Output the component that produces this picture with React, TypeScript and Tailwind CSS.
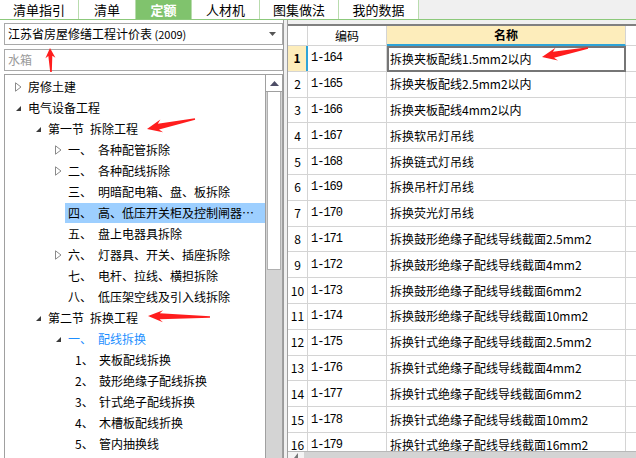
import React from 'react';

type Node = {
  level: number;
  toggle?: 'open' | 'closed';
  prefix?: string;
  label: string;
  sub?: string;
  selected?: boolean;
  blue?: boolean;
};

const tree: Node[] = [
  { level: 0, toggle: 'closed', label: '房修土建' },
  { level: 0, toggle: 'open', label: '电气设备工程' },
  { level: 1, toggle: 'open', label: '第一节', sub: '拆除工程' },
  { level: 2, toggle: 'closed', prefix: '一、', label: '各种配管拆除' },
  { level: 2, toggle: 'closed', prefix: '二、', label: '各种配线拆除' },
  { level: 2, prefix: '三、', label: '明暗配电箱、盘、板拆除' },
  { level: 2, prefix: '四、', label: '高、低压开关柜及控制闸器…', selected: true },
  { level: 2, prefix: '五、', label: '盘上电器具拆除' },
  { level: 2, toggle: 'closed', prefix: '六、', label: '灯器具、开关、插座拆除' },
  { level: 2, prefix: '七、', label: '电杆、拉线、横担拆除' },
  { level: 2, prefix: '八、', label: '低压架空线及引入线拆除' },
  { level: 1, toggle: 'open', label: '第二节', sub: '拆换工程' },
  { level: 2, toggle: 'open', prefix: '一、', label: '配线拆换', blue: true },
  { level: 3, prefix: '1、', label: '夹板配线拆换' },
  { level: 3, prefix: '2、', label: '鼓形绝缘子配线拆换' },
  { level: 3, prefix: '3、', label: '针式绝子配线拆换' },
  { level: 3, prefix: '4、', label: '木槽板配线折换' },
  { level: 3, prefix: '5、', label: '管内抽换线' },
];

const indent = ['pl-[10px]', 'pl-[30px]', 'pl-[50px]', 'pl-[70px]'];

const rows: [string, string][] = [
  ['1-164', '拆换夹板配线1.5mm2以内'],
  ['1-165', '拆换夹板配线2.5mm2以内'],
  ['1-166', '拆换夹板配线4mm2以内'],
  ['1-167', '拆换软吊灯吊线'],
  ['1-168', '拆换链式灯吊线'],
  ['1-169', '拆换吊杆灯吊线'],
  ['1-170', '拆换荧光灯吊线'],
  ['1-171', '拆换鼓形绝缘子配线导线截面2.5mm2'],
  ['1-172', '拆换鼓形绝缘子配线导线截面4mm2'],
  ['1-173', '拆换鼓形绝缘子配线导线截面6mm2'],
  ['1-174', '拆换鼓形绝缘子配线导线截面10mm2'],
  ['1-175', '拆换针式绝缘子配线导线截面2.5mm2'],
  ['1-176', '拆换针式绝缘子配线导线截面4mm2'],
  ['1-177', '拆换针式绝缘子配线导线截面6mm2'],
  ['1-178', '拆换针式绝缘子配线导线截面10mm2'],
  ['1-179', '拆换针式绝缘子配线导线截面16mm2'],
];

const tabs = [
  { label: '清单指引', w: 'w-[79px]' },
  { label: '清单', w: 'w-[57px]' },
  { label: '定额', w: 'w-[56px]', active: true },
  { label: '人材机', w: 'w-[68px]' },
  { label: '图集做法', w: 'w-[79px]' },
  { label: '我的数据', w: 'w-[80px]' },
];

function arrowPoints(tip: [number, number], tail: [number, number], headLen: number, headW: number, shaftW: number) {
  const dx = tail[0] - tip[0];
  const dy = tail[1] - tip[1];
  const L = Math.hypot(dx, dy);
  const ux = dx / L, uy = dy / L;
  const nx = -uy, ny = ux;
  const p = (a: number, b: number) => `${tip[0] + ux * a + nx * b},${tip[1] + uy * a + ny * b}`;
  return [
    p(0, 0),
    p(headLen, headW / 2),
    p(headLen * 0.78, shaftW / 2),
    p(L, 0.8),
    p(L, -0.8),
    p(headLen * 0.78, -shaftW / 2),
    p(headLen, -headW / 2),
  ].join(' ');
}

const Toggle = ({ kind }: { kind?: 'open' | 'closed' }) => (
  <span className="w-[13px] h-full flex items-center shrink-0">
    {kind === 'closed' && (
      <svg width="7" height="10" viewBox="0 0 7 10">
        <path d="M0.5 0.8 L6 5 L0.5 9.2 Z" fill="white" stroke="#8a8a8a" strokeWidth="1" />
      </svg>
    )}
    {kind === 'open' && (
      <svg width="7" height="10" viewBox="0 0 7 10">
        <path d="M6 3 L6 8 L1 8 Z" fill="#3a3a3a" />
      </svg>
    )}
  </span>
);

export default function App() {
  return (
    <div className="relative w-[636px] h-[458px] overflow-hidden bg-[#f0f0f0] font-['Noto_Sans_CJK_SC',sans-serif] text-[12px] text-black">
      {/* tabs */}
      <div className="flex h-[20px] border-b border-[#8cc97b] bg-[#f0f0f0]">
        {tabs.map((t) => (
          <div
            key={t.label}
            className={`${t.w} h-full flex items-center justify-center border-r border-[#b9dcae] text-[13px] leading-none ${
              t.active ? 'bg-[#80c36d] text-white font-bold' : 'bg-white'
            }`}
          >
            {t.label}
          </div>
        ))}
      </div>

      <div className="flex h-[438px]">
        {/* left panel */}
        <div className="w-[283px] h-full bg-white flex flex-col pl-[4px]">
          <div className="mt-[3px] h-[22px] border border-[#a9a9a9] flex items-center pl-[3px] pr-[6px]">
            <span className="flex-1 leading-none">江苏省房屋修缮工程计价表<span className="text-[11px]"> (2009)</span></span>
            <svg width="7" height="4" viewBox="0 0 7 4">
              <path d="M0 0 L7 0 L3.5 4 Z" fill="#555" />
            </svg>
          </div>
          <div className="mt-[4px] h-[22px] border border-[#a9a9a9] flex items-center pl-[3px] text-[#9a9a9a]">水箱</div>
          <div className="mt-[3px] flex-1 border border-[#a0a0a0] border-b-0 flex overflow-hidden">
            <div className="flex-1 pt-[1px] overflow-hidden">
              {tree.map((n, i) => (
                <div key={i} className={`h-[21px] flex items-center ${indent[n.level]}`}>
                  {n.level < 3 && <Toggle kind={n.toggle} />}
                  <div
                    className={`flex-1 h-[20px] flex items-center whitespace-nowrap ${
                      n.selected ? 'bg-[#9dcfff] -ml-[3px] pl-[3px]' : ''
                    } ${n.blue ? 'text-[#1e8fff]' : ''}`}
                  >
                    {n.prefix && (
                      <span className={n.level === 3 ? 'w-[24px] shrink-0' : 'w-[30px] shrink-0'}>{n.prefix}</span>
                    )}
                    <span>{n.label}</span>
                    {n.sub && <span className="ml-[6px]">{n.sub}</span>}
                  </div>
                </div>
              ))}
            </div>
            {/* vertical scrollbar */}
            <div className="w-[17px] shrink-0 flex flex-col border-l border-[#a0a0a0] bg-[#d4d4d4]">
              <div className="h-[17px] bg-white border-b border-[#a0a0a0] flex items-center justify-center">
                <svg width="9" height="5" viewBox="0 0 9 5">
                  <path d="M0 5 L4.5 0 L9 5 Z" fill="#4d4d66" />
                </svg>
              </div>
              <div className="h-[178px] bg-white mx-[1px] border-x border-b border-[#b0b0b0]" />
            </div>
          </div>
        </div>

        {/* splitter */}
        <div className="w-[4px] h-full border-l border-[#9a9a9a] bg-[#f0f0f0]" />

        {/* right panel */}
        <div className="flex-1 h-full flex flex-col border-l border-[#a0a0a0]">
          <div className="h-[4px] bg-[#f0f0f0]" />
          <div className="flex-1 flex flex-col bg-white border-t-2 border-[#808080] overflow-hidden">
            {/* header */}
            <div className="h-[20px] flex shrink-0">
              <div className="w-[20px] border-r border-b border-[#d4d4d4]" />
              <div className="w-[79px] border-r border-b border-[#d4d4d4] flex items-center justify-center">编码</div>
              <div className="w-[239px] bg-[#fdedbb] border-r border-[#d4d4d4] border-b-2 border-b-[#2fa4d8] flex items-center justify-center font-bold">
                名称
              </div>
              <div className="flex-1 border-b border-[#d4d4d4]" />
            </div>
            {/* rows */}
            <div className="flex-1 overflow-hidden">
              {rows.map(([code, name], i) => (
                <div key={code} className="h-[25.8px] flex border-b border-[#d4d4d4]">
                  <div
                    className={`w-[20px] shrink-0 border-r flex items-center justify-center ${
                      i === 0 ? 'bg-[#fdedbb] font-bold border-[#2fa4d8] border-r-2' : 'border-[#d4d4d4]'
                    }`}
                  >
                    {i + 1}
                  </div>
                  <div className="w-[79px] shrink-0 border-r border-[#d4d4d4] flex items-center pl-[3px] font-['Liberation_Mono',monospace] text-[12px] tracking-[-1px]">
                    {code}
                  </div>
                  <div
                    className={`w-[239px] shrink-0 flex items-center whitespace-nowrap ${
                      i === 0 ? 'border-2 border-[#767676] pl-[1px] -mb-[1px]' : 'border-r border-[#d4d4d4] pl-[3px]'
                    }`}
                  >
                    {name}
                  </div>
                  <div className="flex-1" />
                </div>
              ))}
            </div>
            {/* horizontal scrollbar */}
            <div className="h-[7px] shrink-0 flex bg-[#d4d4d4] border-t border-[#b8b8b8]">
              <div className="w-[16px] bg-[#f4f4f4] flex items-end justify-center">
                <svg width="4" height="5" viewBox="0 0 4 5">
                  <path d="M4 0 L0 5 L4 5 Z" fill="#777" />
                </svg>
              </div>
            </div>
          </div>
        </div>
      </div>

      {/* red annotation arrows */}
      <svg className="absolute inset-0 pointer-events-none" width="636" height="458">
        <polygon points={arrowPoints([50, 48], [51, 72], 10, 10, 4)} fill="#ff1d1d" />
        <polygon points={arrowPoints([147, 129], [195, 119], 15, 13, 6)} fill="#ff1d1d" />
        <polygon points={arrowPoints([148, 316], [210, 317], 15, 12, 6)} fill="#ff1d1d" />
        <polygon points={arrowPoints([542, 57], [588, 48], 15, 13, 6)} fill="#ff1d1d" />
      </svg>
    </div>
  );
}
